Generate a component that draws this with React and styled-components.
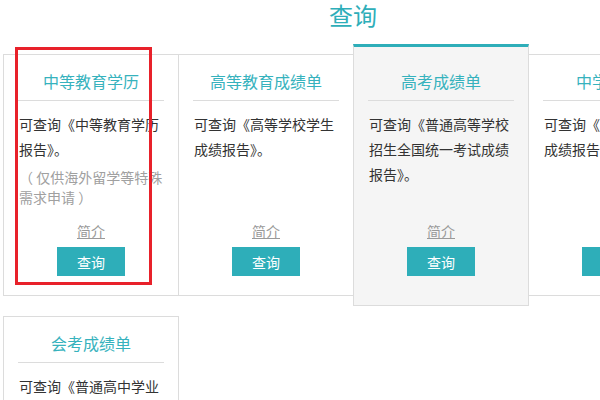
import styled, {createGlobalStyle, css} from "styled-components";

const GlobalStyle = createGlobalStyle`
  html, body {
    margin: 0;
    padding: 0;
    background: #fff;
    overflow: hidden;
  }
  body {
    font-family: "Noto Sans CJK SC", "Noto Sans", sans-serif;
    color: #333;
  }
`;

const Page = styled.div`
  width: 700px;
  margin-left: 3px;
`;

const Heading = styled.h2`
  margin: 0 0 24px;
  font-size: 24px;
  line-height: 30px;
  font-weight: normal;
  text-align: center;
  color: #2eaeb9;
`;

const Row = styled.div`
  display: flex;
  align-items: flex-start;
  margin-bottom: 20px;
`;

const StyledCard = styled.div`
  position: relative;
  box-sizing: border-box;
  width: 176px;
  height: 242px;
  margin-right: -1px;
  padding: 14px 14px 19px;
  border: 1px solid #dcdcdc;
  background: #fff;
  display: flex;
  flex-direction: column;
  flex-shrink: 0;

  ${(p) =>
    p.$active &&
    css`
      z-index: 2;
      height: 262px;
      margin-top: -10px;
      margin-bottom: -10px;
      padding-top: 22px;
      padding-bottom: 29px;
      border-top: 3px solid #2eaeb9;
      background: #f5f5f5;
    `}
`;

const CardTitle = styled.div`
  font-size: 16px;
  line-height: 24px;
  color: #36b2bd;
  text-align: center;
  padding-bottom: 7px;
  border-bottom: 1px solid #dcdcdc;
`;

const CardText = styled.div`
  margin-top: 11px;
  font-size: 14px;
  line-height: 25px;
  color: #333;
  padding-left: 1px;
`;

const Note = styled.div`
  margin-top: 5px;
  font-size: 14px;
  line-height: 20px;
  color: #a0a0a0;
  padding-left: 1px;
`;

const CardFooter = styled.div`
  margin-top: auto;
  display: flex;
  flex-direction: column;
  align-items: center;
  gap: 6px;
`;

const IntroLink = styled.a`
  font-size: 14px;
  line-height: 20px;
  color: #999;
  text-decoration: underline;
  cursor: pointer;
`;

const QueryButton = styled.button`
  width: 68px;
  height: 29px;
  border: none;
  padding: 0;
  background: #2eaeb9;
  color: #fff;
  font-family: inherit;
  font-size: 14px;
  cursor: pointer;
`;

const Highlight = styled.div`
  position: absolute;
  left: 11px;
  top: -8px;
  width: 137px;
  height: 238px;
  box-sizing: border-box;
  border: 3px solid #e8212a;
  pointer-events: none;
`;

const cards = [
  {
    title: "中等教育学历",
    text: "可查询《中等教育学历报告》。",
    note: "（ 仅供海外留学等特殊需求申请 ）",
    marked: true,
  },
  {title: "高等教育成绩单", text: "可查询《高等学校学生成绩报告》。"},
  {
    title: "高考成绩单",
    text: "可查询《普通高等学校招生全国统一考试成绩报告》。",
    active: true,
  },
  {title: "中学成绩单", text: "可查询《中学学业水平成绩报告》。"},
];

const moreCards = [
  {title: "会考成绩单", text: "可查询《普通高中学业水平考试成绩报告》。"},
];

function Card({card}) {
  return (
    <StyledCard $active={card.active}>
      <CardTitle>{card.title}</CardTitle>
      <CardText>{card.text}</CardText>
      {card.note && <Note>{card.note}</Note>}
      <CardFooter>
        <IntroLink>简介</IntroLink>
        <QueryButton>查询</QueryButton>
      </CardFooter>
      {card.marked && <Highlight />}
    </StyledCard>
  );
}

export default function App() {
  return (
    <>
      <GlobalStyle />
      <Page>
        <Heading>查询</Heading>
        <Row>
          {cards.map((c) => (
            <Card key={c.title} card={c} />
          ))}
        </Row>
        <Row>
          {moreCards.map((c) => (
            <Card key={c.title} card={c} />
          ))}
        </Row>
      </Page>
    </>
  );
}
